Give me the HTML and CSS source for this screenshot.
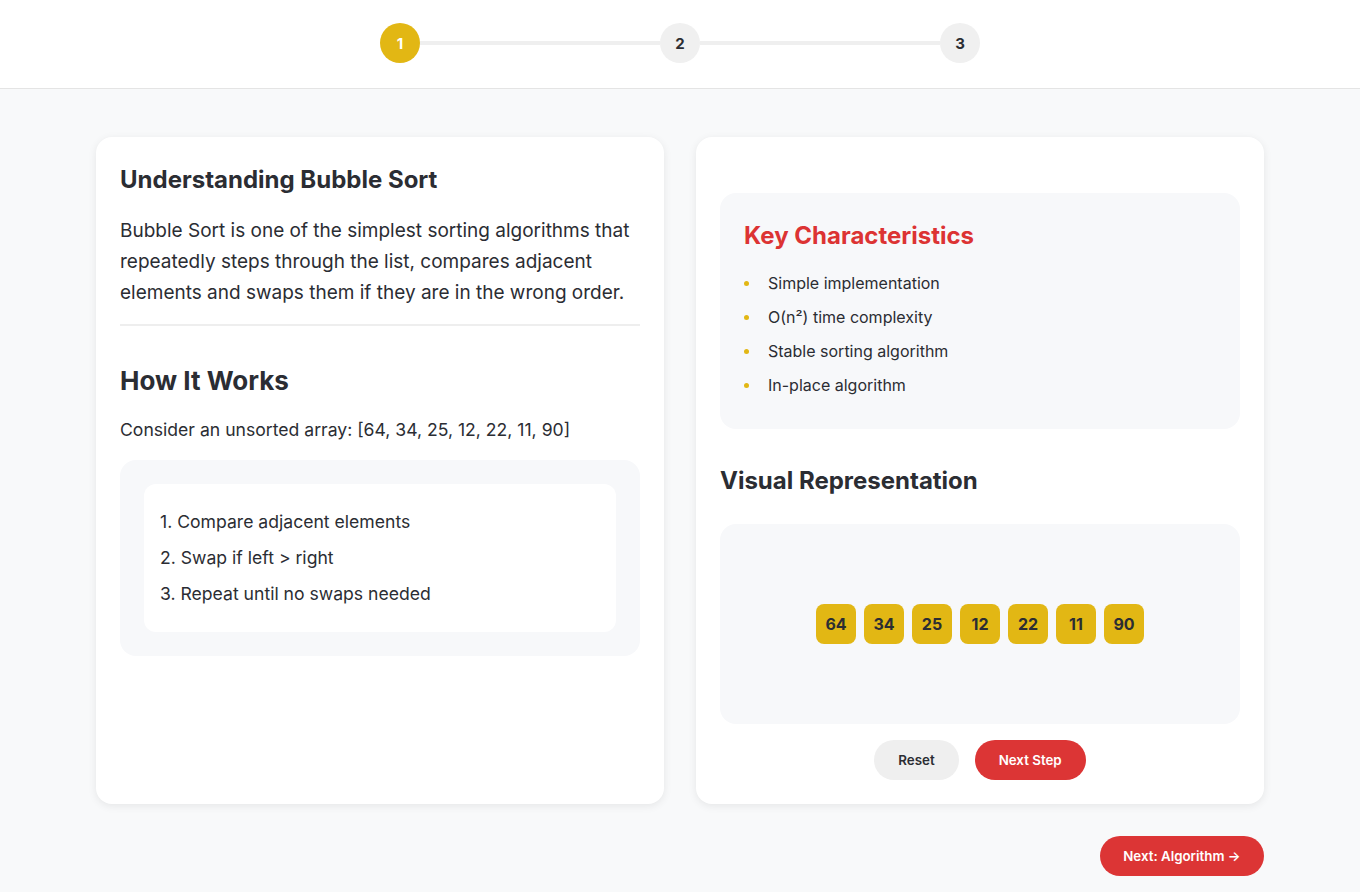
FILE: index.html
```html
<!DOCTYPE html>
<html lang="en">
<head>
<meta charset="utf-8">
<title>Bubble Sort</title>
<link rel="stylesheet" href="styles.css">
</head>
<body>
<header class="topbar">
  <div class="stepper">
    <div class="step active">1</div>
    <div class="step-line"></div>
    <div class="step">2</div>
    <div class="step-line"></div>
    <div class="step">3</div>
  </div>
</header>
<main class="content">
  <div class="grid">
    <section class="card">
      <div class="intro">
        <h2 class="title">Understanding Bubble Sort</h2>
        <p class="lead">Bubble Sort is one of the simplest sorting algorithms that repeatedly steps through the list, compares adjacent elements and swaps them if they are in the wrong order.</p>
      </div>
      <h2 class="title-lg">How It Works</h2>
      <p class="text">Consider an unsorted array: [64, 34, 25, 12, 22, 11, 90]</p>
      <div class="panel">
        <div class="inner">
          <div class="step-item">1. Compare adjacent elements</div>
          <div class="step-item">2. Swap if left &gt; right</div>
          <div class="step-item">3. Repeat until no swaps needed</div>
        </div>
      </div>
    </section>
    <section class="card">
      <div class="panel chars">
        <h3 class="title red">Key Characteristics</h3>
        <ul class="bullets">
          <li>Simple implementation</li>
          <li>O(n²) time complexity</li>
          <li>Stable sorting algorithm</li>
          <li>In-place algorithm</li>
        </ul>
      </div>
      <h2 class="title visual-title">Visual Representation</h2>
      <div class="visual">
        <div class="cell">64</div>
        <div class="cell">34</div>
        <div class="cell">25</div>
        <div class="cell">12</div>
        <div class="cell">22</div>
        <div class="cell">11</div>
        <div class="cell">90</div>
      </div>
      <div class="controls">
        <button class="btn btn-gray">Reset</button>
        <button class="btn btn-red">Next Step</button>
      </div>
    </section>
  </div>
  <div class="footer-nav">
    <button class="btn btn-red">Next: Algorithm →</button>
  </div>
</main>
</body>
</html>
```
FILE: styles.css
```css
* { box-sizing: border-box; }
html, body { margin: 0; padding: 0; }
body {
  font-family: Inter, "Noto Sans", sans-serif;
  color: #2b2d33;
  background: #f8f9fa;
  min-height: 892px;
}
.topbar {
  background: #fff;
  height: 89px;
  border-bottom: 1px solid #e4e4e4;
  display: flex;
  align-items: center;
  justify-content: center;
  padding-bottom: 2px;
}
.stepper {
  width: 600px;
  display: flex;
  align-items: center;
}
.step {
  width: 40px;
  height: 40px;
  border-radius: 50%;
  background: #f0f0f0;
  color: #2b2d33;
  display: flex;
  align-items: center;
  justify-content: center;
  font-weight: 700;
  font-size: 15px;
  flex: none;
}
.step.active { background: #e2b714; color: #fff; }
.step-line { flex: 1; height: 4px; background: #efefef; }

.content { padding: 48px 96px 16px; }
.grid {
  display: grid;
  grid-template-columns: 1fr 1fr;
  gap: 32px;
}
.card {
  background: #fff;
  border-radius: 16px;
  box-shadow: 0 2px 8px rgba(0,0,0,0.08);
  padding: 24px;
  min-height: 666px;
}
.title {
  margin: 0;
  padding-top: 1px;
  font-size: 24px;
  line-height: 36px;
  font-weight: 700;
}
.title.red { color: #dc3333; }
.intro {
  border-bottom: 2px solid #eeeeee;
  padding-bottom: 16px;
}
.lead {
  margin: 17px 0 0;
  font-size: 19px;
  line-height: 31px;
}
.title-lg {
  margin: 34px 0 0;
  font-size: 26px;
  line-height: 42px;
  font-weight: 700;
}
.text {
  margin: 16px 0 18px;
  font-size: 17.6px;
  line-height: 24px;
}
.panel {
  background: #f7f8fa;
  border-radius: 16px;
  padding: 24px;
}
.inner {
  background: #fff;
  border-radius: 12px;
  padding: 20px 16px 20px;
}
.step-item {
  font-size: 17.6px;
  line-height: 36px;
}
.chars { margin-top: 32px; }
.bullets {
  list-style: none;
  margin: 12px 0 3px;
  padding: 0;
}
.bullets li {
  position: relative;
  padding: 5px 0 5px 24px;
  font-size: 16px;
  line-height: 24px;
}
.bullets li::before {
  content: "";
  position: absolute;
  left: 0;
  top: 15px;
  width: 5px;
  height: 5px;
  border-radius: 50%;
  background: #e2b714;
}
.visual-title { margin-top: 33px; }
.visual {
  margin-top: 25px;
  height: 200px;
  background: #f7f8fa;
  border-radius: 16px;
  display: flex;
  align-items: center;
  justify-content: center;
  gap: 8px;
}
.cell {
  width: 40px;
  height: 40px;
  border-radius: 8px;
  background: #e2b714;
  display: flex;
  align-items: center;
  justify-content: center;
  font-weight: 700;
  font-size: 16px;
  color: #2b2d33;
}
.controls {
  margin-top: 16px;
  display: flex;
  justify-content: center;
  gap: 16px;
}
.btn {
  font-family: Inter, "Noto Sans", sans-serif;
  height: 40px;
  padding: 0 24px;
  border: none;
  border-radius: 20px;
  font-size: 13.33px;
  font-weight: 600;
  cursor: pointer;
}
.btn-gray { background: #efefef; color: #2b2d33; }
.btn-red { background: #dc3535; color: #fff; }
.footer-nav {
  margin-top: 32px;
  display: flex;
  justify-content: flex-end;
}
.footer-nav .btn { padding: 0 23.5px; }
```
